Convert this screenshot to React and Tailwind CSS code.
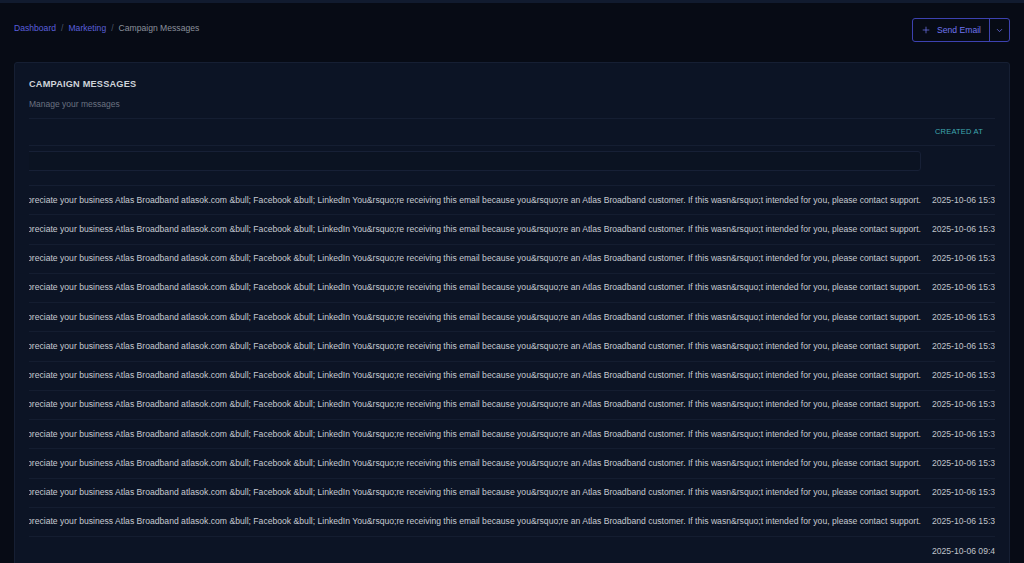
import { Plus, ChevronDown } from 'lucide-react';

const message =
  'Hello valued customer, thank you for choosing us. We appreciate your business Atlas Broadband atlasok.com &bull; Facebook &bull; LinkedIn You&rsquo;re receiving this email because you&rsquo;re an Atlas Broadband customer. If this wasn&rsquo;t intended for you, please contact support.';

const rows = [
  ...Array.from({ length: 12 }, () => ({ message, createdAt: '2025-10-06 15:32:18' })),
  { message: '', createdAt: '2025-10-06 09:41:05' },
];

const App = () => {
  return (
    <div className="min-h-[563px] bg-[#070b15] font-['Liberation_Sans',Arial,sans-serif] overflow-hidden">
      <div className="h-[3px] bg-[#111b2f]" />

      <div className="flex items-start justify-between pl-[14px] pr-[14px] pt-[15px]">
        <nav className="mt-[6px] flex items-center gap-[5px] text-[8.6px] leading-none">
          <span className="text-[#5a5fdc]">Dashboard</span>
          <span className="text-[#4b5563]">/</span>
          <span className="text-[#5a5fdc]">Marketing</span>
          <span className="text-[#4b5563]">/</span>
          <span className="text-[#8b919c]">Campaign Messages</span>
        </nav>
        <div className="flex h-[24px] items-stretch rounded-[3px] border border-[#3d42b0] text-[#6f74ee]">
          <button className="flex items-center gap-[6px] pl-[8px] pr-[8px] text-[8.6px]">
            <Plus size={10} strokeWidth={1.75} />
            <span>Send Email</span>
          </button>
          <div className="w-px bg-[#3d42b0]" />
          <button className="flex w-[19px] items-center justify-center">
            <ChevronDown size={9} strokeWidth={2} />
          </button>
        </div>
      </div>

      <div className="mx-[14px] mt-[20px] rounded-[3px] border border-[#161f33] bg-[#0c1425] px-[14px] pt-[14px]">
        <h1 className="text-[9.2px] font-bold leading-[14px] tracking-[0.2px] text-[#cfd3da]">
          CAMPAIGN MESSAGES
        </h1>
        <p className="mt-[7px] text-[8.5px] leading-[12px] text-[#6b7280]">Manage your messages</p>

        <div className="mt-[8px] overflow-hidden">
          <div className="flex h-[28px] items-center border-y border-[#151e32]">
            <div className="flex-1" />
            <div className="w-[74px] pl-[14px] text-[7.5px] tracking-[0.2px] text-[#3fa9b0]">CREATED AT</div>
          </div>

          <div className="flex h-[40px] items-start border-b border-[#151e32] pt-[5px]">
            <div className="-ml-[8px] flex-1">
              <div className="h-[20px] rounded-[3px] border border-[#172036] bg-[#0b1322]" />
            </div>
            <div className="w-[74px]" />
          </div>

          {rows.map((row, index) => (
            <div
              key={index}
              className={`flex h-[29.25px] items-center ${index < rows.length - 1 ? 'border-b border-[#141d30]' : ''}`}
            >
              <div className="flex min-w-0 flex-1 justify-end overflow-hidden">
                <span className="whitespace-nowrap text-[8.62px] text-[#c6cad1]">{row.message}</span>
              </div>
              <div className="w-[74px] overflow-hidden whitespace-nowrap pl-[11px] text-[8.6px] text-[#c0c4cb]">
                {row.createdAt}
              </div>
            </div>
          ))}
        </div>
      </div>
    </div>
  );
};

export default App;
